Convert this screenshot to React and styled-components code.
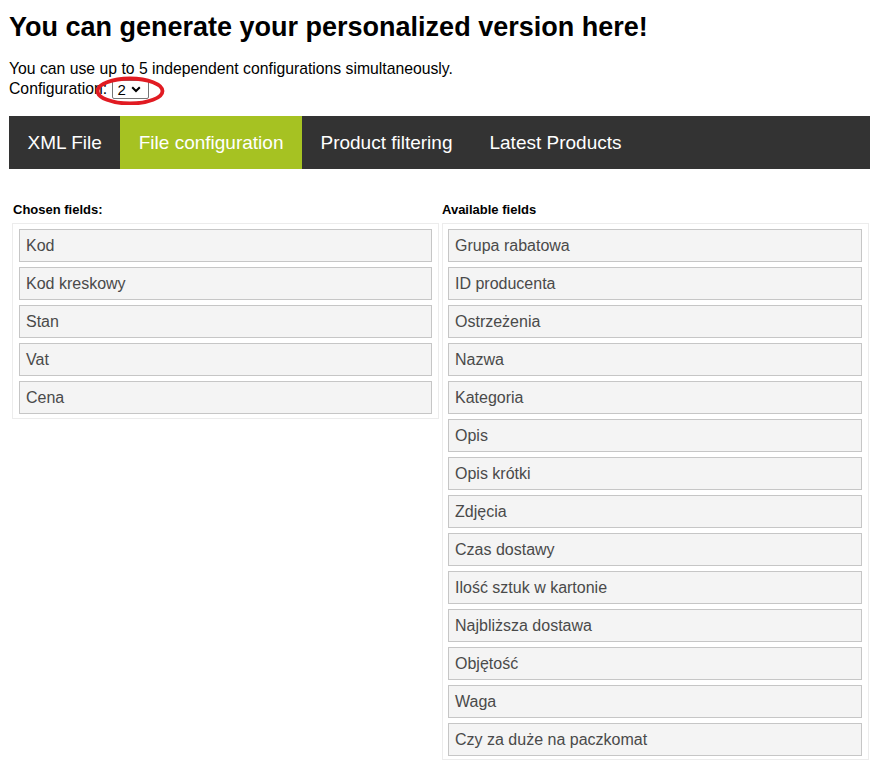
import React from "react";
import styled, { createGlobalStyle } from "styled-components";

const GlobalStyle = createGlobalStyle`
  body {
    margin: 0;
    background: #fff;
    font-family: "Liberation Sans", Arial, sans-serif;
    color: #000;
  }
`;

const Page = styled.div`
  padding: 0 2px 0 9px;
`;

const Title = styled.h1`
  font-size: 27px;
  font-weight: 700;
  margin: 12px 0 16px;
  line-height: 31px;
`;

const Intro = styled.p`
  font-size: 15.75px;
  line-height: 20px;
  margin: 0 0 16px;
`;

const SelectWrap = styled.span`
  position: relative;
  display: inline-block;
  vertical-align: top;
  margin: 1px 0 0 1px;
`;

const Select = styled.select`
  appearance: none;
  font-family: "Liberation Sans", Arial, sans-serif;
  font-size: 15px;
  height: 19px;
  width: 37px;
  padding: 0 0 0 4px;
  border: 1px solid #767676;
  border-radius: 2px;
  background: #fff;
  color: #000;
  line-height: 17px;
`;

const Chevron = styled.svg`
  position: absolute;
  left: 19px;
  top: 6px;
  pointer-events: none;
`;

const Mark = styled.svg`
  position: absolute;
  left: -16px;
  top: -4px;
  pointer-events: none;
`;

const TabBar = styled.nav`
  display: flex;
  background: #333333;
  height: 53px;
`;

const Tab = styled.div`
  display: flex;
  align-items: center;
  padding: 0 18.5px;
  font-size: 19px;
  color: #fff;
  background: ${(p) => (p.$active ? "#a6c222" : "transparent")};
`;

const Columns = styled.div`
  display: grid;
  grid-template-columns: 427px 427px;
  column-gap: 3px;
  padding: 33px 0 0 3px;
  align-items: start;
`;

const Label = styled.h5`
  font-size: 13px;
  font-weight: 700;
  margin: 0 0 6px;
  line-height: 15px;
  padding-left: ${(p) => (p.$left ? "1px" : "0")};
`;

const FieldBox = styled.div`
  border: 1px solid #ececec;
  padding: 5px 6px ${(p) => p.$bottom}px ${(p) => p.$left}px;
`;

const Field = styled.div`
  height: 31px;
  border: 1px solid #c6c6c6;
  background: #f4f4f4;
  margin-bottom: 5px;
  padding-left: 6px;
  display: flex;
  align-items: center;
  font-size: 16px;
  color: #4a4a4a;
  &:last-child {
    margin-bottom: 0;
  }
`;

const tabs = ["XML File", "File configuration", "Product filtering", "Latest Products"];

const chosen = ["Kod", "Kod kreskowy", "Stan", "Vat", "Cena"];

const available = [
  "Grupa rabatowa",
  "ID producenta",
  "Ostrzeżenia",
  "Nazwa",
  "Kategoria",
  "Opis",
  "Opis krótki",
  "Zdjęcia",
  "Czas dostawy",
  "Ilość sztuk w kartonie",
  "Najbliższa dostawa",
  "Objętość",
  "Waga",
  "Czy za duże na paczkomat",
];

export default function App() {
  return (
    <Page>
      <GlobalStyle />
      <Title>You can generate your personalized version here!</Title>
      <Intro>
        You can use up to 5 independent configurations simultaneously.
        <br />
        Configuration:{" "}
        <SelectWrap>
          <Select defaultValue="2">
            {[1, 2, 3, 4, 5].map((n) => (
              <option key={n} value={n}>
                {n}
              </option>
            ))}
          </Select>
          <Chevron width="10" height="7" viewBox="0 0 10 7">
            <path d="M1.2 1.2 L5 5 L8.8 1.2" fill="none" stroke="#000" strokeWidth="2" />
          </Chevron>
          <Mark width="70" height="29" viewBox="0 0 70 29">
            <ellipse cx="34" cy="15" rx="32.5" ry="12.5" fill="none" stroke="#e11b22" strokeWidth="3.8" />
          </Mark>
        </SelectWrap>
      </Intro>
      <TabBar>
        {tabs.map((t) => (
          <Tab key={t} $active={t === "File configuration"}>
            {t}
          </Tab>
        ))}
      </TabBar>
      <Columns>
        <div>
          <Label $left>Chosen fields:</Label>
          <FieldBox $bottom={4} $left={6}>
            {chosen.map((f) => (
              <Field key={f}>{f}</Field>
            ))}
          </FieldBox>
        </div>
        <div>
          <Label>Available fields</Label>
          <FieldBox $bottom={3} $left={5}>
            {available.map((f) => (
              <Field key={f}>{f}</Field>
            ))}
          </FieldBox>
        </div>
      </Columns>
    </Page>
  );
}
